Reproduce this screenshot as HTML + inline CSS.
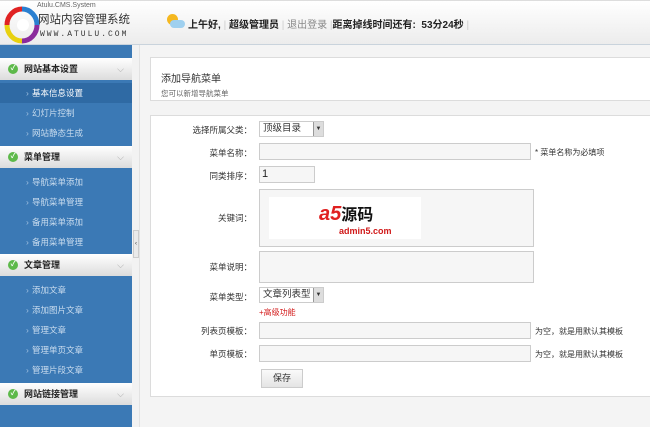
<!DOCTYPE html>
<html><head><meta charset="utf-8"><style>
*{margin:0;padding:0;box-sizing:border-box}
body{width:650px;height:427px;overflow:hidden;font-family:"Liberation Sans","Noto Sans CJK SC",sans-serif;font-size:9px;color:#333;background:#f4f4f4;position:relative}
.abs{position:absolute}
#hdr{left:0;top:0;width:650px;height:45px;background:linear-gradient(#fff,#ececec);border-bottom:1px solid #c9d3dc;border-top:1px solid #ddd}
#side{left:0;top:45px;width:132px;height:382px;background:#3b79b5}
.grp{position:absolute;left:0;width:132px;height:22px;background:linear-gradient(#fff,#dcdcdc);font-weight:bold;font-size:9px;color:#222;line-height:22px;padding-left:24px}
.grp:before{content:"✓";position:absolute;left:8px;top:6px;width:10px;height:10px;border-radius:50%;background:#5db94a;color:#fff;font-size:7px;line-height:10px;text-align:center}
.grp:after{content:"⌵";position:absolute;right:8px;top:0;color:#aaa;font-weight:normal}
.it{position:absolute;left:0;width:132px;height:20px;line-height:20px;color:#c9dcee;padding-left:32px;font-size:8.5px}
.it:before{content:"›";position:absolute;left:26px;color:#9fc0e0}
.panel{background:#fff;border:1px solid #dcdcdc}
.lbl{position:absolute;width:112px;text-align:right;font-size:8.5px;color:#333}
.inp{position:absolute;border:1px solid #ccc;background:#f6f6f6}
.note{position:absolute;font-size:8px;color:#333}
</style></head><body>
<div id="hdr" class="abs">
 <svg class="abs" style="left:4px;top:5px" width="36" height="38" viewBox="0 0 36 38">
  <path d="M18 3 A15 16 0 0 1 33 19" stroke="#2a7fd0" stroke-width="5" fill="none"/>
  <path d="M33 19 A15 16 0 0 1 18 35" stroke="#8b2b9c" stroke-width="5" fill="none"/>
  <path d="M18 35 A15 16 0 0 1 3 19" stroke="#e8d10f" stroke-width="5" fill="none"/>
  <path d="M3 19 A15 16 0 0 1 18 3" stroke="#e02222" stroke-width="5" fill="none"/>
  <circle cx="19" cy="19" r="6" fill="#fff"/>
 </svg>
 <div class="abs" style="left:37px;top:1px;font-size:7px;color:#666">Atulu.CMS.System</div>
 <div class="abs" style="left:38px;top:10px;font-size:11.5px;color:#333">网站内容管理系统</div>
 <div class="abs" style="left:40px;top:29px;font-size:8px;color:#333;letter-spacing:2px;font-family:'Liberation Mono',monospace">WWW.ATULU.COM</div>
 <div class="abs" style="left:165px;top:13px;width:20px;height:14px"><div class="abs" style="left:2px;top:0;width:11px;height:11px;border-radius:50%;background:#f5b820"></div><div class="abs" style="left:5px;top:6px;width:15px;height:8px;border-radius:5px;background:#9fd0ef"></div></div>
 <div class="abs" style="left:188px;top:15px;font-size:10px;color:#222;white-space:nowrap">
  <b>上午好,</b> <span style="color:#ccc">|</span> <b>超级管理员</b> <span style="color:#ccc">|</span> <span style="color:#888">退出登录</span> <span style="color:#ccc">|</span><b>距离掉线时间还有: &nbsp;53分24秒</b> <span style="color:#ccc">|</span>
 </div>
</div>
<div id="side" class="abs"></div>
<div class="grp" style="top:58px">网站基本设置</div>
<div class="it" style="top:83px;background:#2f6aa4;color:#fff">基本信息设置</div>
<div class="it" style="top:103px">幻灯片控制</div>
<div class="it" style="top:123px">网站静态生成</div>
<div class="grp" style="top:146px">菜单管理</div>
<div class="it" style="top:172px">导航菜单添加</div>
<div class="it" style="top:192px">导航菜单管理</div>
<div class="it" style="top:212px">备用菜单添加</div>
<div class="it" style="top:232px">备用菜单管理</div>
<div class="grp" style="top:254px">文章管理</div>
<div class="it" style="top:280px">添加文章</div>
<div class="it" style="top:300px">添加图片文章</div>
<div class="it" style="top:320px">管理文章</div>
<div class="it" style="top:340px">管理单页文章</div>
<div class="it" style="top:360px">管理片段文章</div>
<div class="grp" style="top:383px">网站链接管理</div>
<div class="abs" style="left:132px;top:45px;width:8px;height:382px;background:#f2f2f2;border-right:1px solid #e2e2e2"></div>
<div class="abs" style="left:133px;top:230px;width:6px;height:28px;background:#eaeaea;border:1px solid #ccc;font-size:6px;line-height:26px;text-align:center">‹</div>

<div class="abs panel" style="left:150px;top:57px;width:505px;height:44px">
 <div class="abs" style="left:10px;top:12px;font-size:10px;color:#333">添加导航菜单</div>
 <div class="abs" style="left:10px;top:30px;font-size:7.5px;color:#666">您可以新增导航菜单</div>
</div>
<div class="abs panel" style="left:150px;top:115px;width:505px;height:282px"></div>

<div class="lbl" style="left:140px;top:124px">选择所属父类：</div>
<div class="inp" style="left:259px;top:121px;width:65px;height:16px;background:#fff;font-size:9.5px;padding-left:3px;line-height:14px">顶级目录<span class="abs" style="right:0;top:0;width:10px;height:14px;background:#ddd;border-left:1px solid #999;font-size:6px;text-align:center">▼</span></div>
<div class="lbl" style="left:140px;top:147px">菜单名称：</div>
<div class="inp" style="left:259px;top:143px;width:272px;height:17px"></div>
<div class="note" style="left:535px;top:147px">* 菜单名称为必填项</div>
<div class="lbl" style="left:140px;top:170px">同类排序：</div>
<div class="inp" style="left:259px;top:166px;width:56px;height:17px;font-size:11px;padding-left:2px;line-height:15px;color:#222">1</div>
<div class="lbl" style="left:140px;top:212px">关键词：</div>
<div class="inp" style="left:259px;top:189px;width:275px;height:58px">
 <div class="abs" style="left:9px;top:7px;width:152px;height:42px;background:#fff">
  <div class="abs" style="left:50px;top:4px;font-size:20px;font-weight:bold;font-style:italic;color:#e02020">a5<span style="color:#111;font-style:normal;font-size:16px">源码</span></div>
  <div class="abs" style="left:70px;top:29px;font-size:9px;font-weight:bold;color:#d01818">admin5.com</div>
 </div>
</div>
<div class="lbl" style="left:140px;top:261px">菜单说明：</div>
<div class="inp" style="left:259px;top:251px;width:275px;height:32px"></div>
<div class="lbl" style="left:140px;top:291px">菜单类型：</div>
<div class="inp" style="left:259px;top:287px;width:65px;height:16px;background:#fff;font-size:9.5px;padding-left:3px;line-height:14px">文章列表型<span class="abs" style="right:0;top:0;width:10px;height:14px;background:#ddd;border-left:1px solid #999;font-size:6px;text-align:center">▼</span></div>
<div class="abs" style="left:259px;top:307px;font-size:8px;color:#d42020">+高级功能</div>
<div class="lbl" style="left:140px;top:325px">列表页模板：</div>
<div class="inp" style="left:259px;top:322px;width:272px;height:17px"></div>
<div class="note" style="left:535px;top:326px">为空，就是用默认其模板</div>
<div class="lbl" style="left:140px;top:348px">单页模板：</div>
<div class="inp" style="left:259px;top:345px;width:272px;height:17px"></div>
<div class="note" style="left:535px;top:349px">为空，就是用默认其模板</div>
<div class="abs" style="left:261px;top:369px;width:42px;height:19px;background:linear-gradient(#fafafa,#e4e4e4);border:1px solid #ccc;font-size:9px;text-align:center;line-height:17px;color:#333">保存</div>
</body></html>
